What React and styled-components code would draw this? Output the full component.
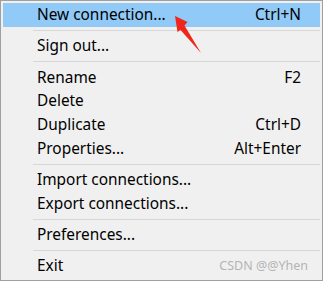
import React from 'react';
import styled, { createGlobalStyle } from 'styled-components';

const GlobalStyle = createGlobalStyle`
  html, body {
    margin: 0;
    padding: 0;
    background: #f0f0f0;
  }
`;

const items = [
  { label: 'New connection...', shortcut: 'Ctrl+N', active: true },
  'sep',
  { label: 'Sign out...' },
  'sep',
  { label: 'Rename', shortcut: 'F2' },
  { label: 'Delete' },
  { label: 'Duplicate', shortcut: 'Ctrl+D' },
  { label: 'Properties...', shortcut: 'Alt+Enter' },
  'sep',
  { label: 'Import connections...' },
  { label: 'Export connections...' },
  'sep',
  { label: 'Preferences...' },
  'sep',
  { label: 'Exit' },
];

const App = () => {
  return (
    <>
      <GlobalStyle />
      <Menu>
        {items.map((item, i) =>
          item === 'sep' ? (
            <Separator key={i} />
          ) : (
            <Item key={i} $active={item.active}>
              <Label>{item.label}</Label>
              {item.shortcut && <Shortcut>{item.shortcut}</Shortcut>}
            </Item>
          )
        )}
        <Watermark>CSDN @@Yhen</Watermark>
        <Arrow viewBox="0 0 323 281" width="323" height="281">
          <polygon
            points="175,16 187.5,22 184.5,25.5 201,53 180.5,30 177.5,32"
            fill="#f0261b"
          />
        </Arrow>
      </Menu>
    </>
  );
};
export default App;

const Menu = styled.div`
  position: relative;
  width: 323px;
  height: 281px;
  box-sizing: border-box;
  border: 1px solid #a0a0a0;
  background: #f0f0f0;
  padding: 2px;
  display: flex;
  flex-direction: column;
  font-family: 'Noto Sans', 'Open Sans', sans-serif;
  font-size: 15.4px;
  color: #000;
`;
const Item = styled.div`
  height: 23.7px;
  flex: none;
  display: flex;
  align-items: center;
  justify-content: space-between;
  padding: 0 19px 0 34px;
  line-height: 23.7px;
  background: ${p => (p.$active ? '#91c9f7' : 'transparent')};
`;
const Label = styled.span`
  white-space: nowrap;
`;
const Shortcut = styled.span`
  white-space: nowrap;
`;
const Separator = styled.div`
  height: 7.6px;
  flex: none;
  display: flex;
  align-items: center;
  padding-left: 30px;
  &::after {
    content: '';
    flex: 1;
    height: 1px;
    background: #d7d7d7;
  }
`;
const Watermark = styled.div`
  position: absolute;
  right: 14px;
  bottom: 5px;
  font-family: 'Noto Sans', sans-serif;
  font-size: 12.5px;
  color: #b4b4b4;
  line-height: 18px;
`;
const Arrow = styled.svg`
  position: absolute;
  left: -1px;
  top: -1px;
  pointer-events: none;
`;
